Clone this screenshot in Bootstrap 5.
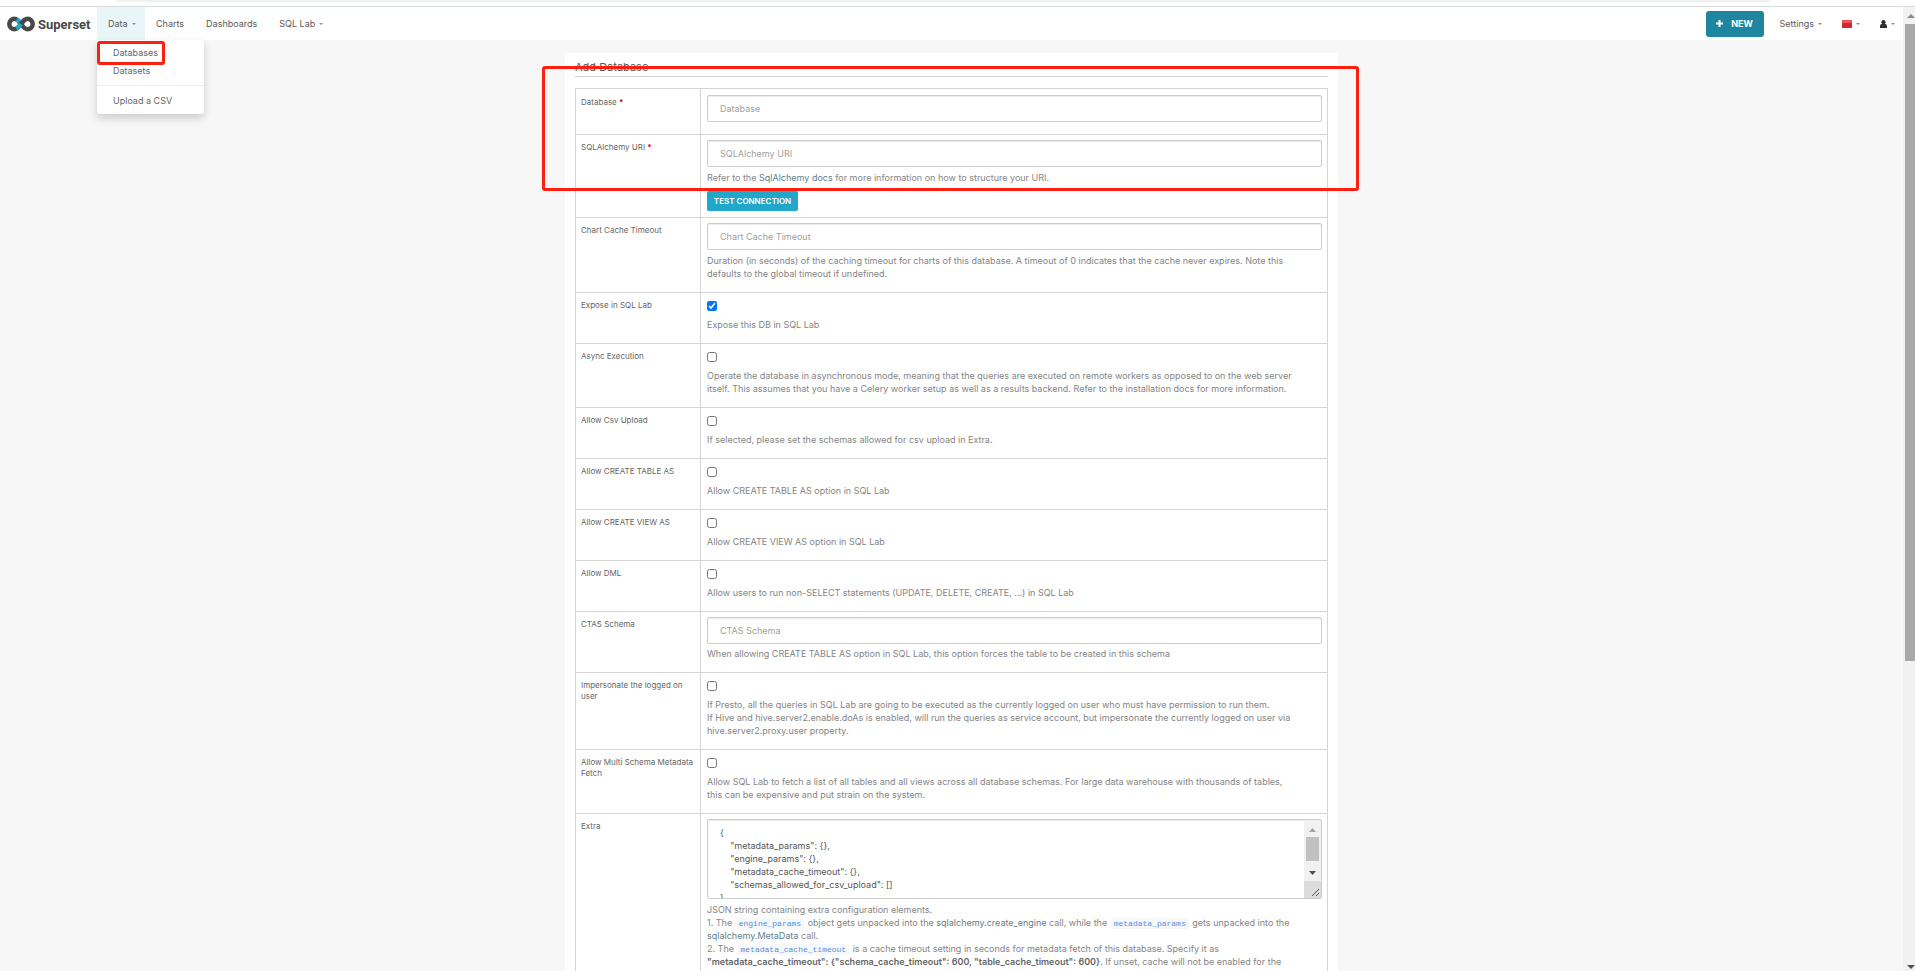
<!DOCTYPE html>
<html lang="en">
<head>
<meta charset="utf-8">
<meta name="viewport" content="width=device-width, initial-scale=1">
<title>Superset - Add Database</title>
<link href="https://cdn.jsdelivr.net/npm/bootstrap@5.3.0/dist/css/bootstrap.min.css" rel="stylesheet">
<style>
body { font-family: Inter, "Liberation Sans", sans-serif; font-size: 9px; line-height: 13px; color: #666; background: #f7f7f7; }
a { color: inherit; text-decoration: none; }
.window-edge { height: 7px; background: #fff; border-bottom: 1px solid #d9dcde; padding: 0 144px 0 116px; }
.window-edge div { height: 2px; background: #f0f1f2; border-radius: 0 0 2px 2px; }
.topbar { height: 33px; background: #fff; padding-left: 7px; }
.brand { width: 90px; color: #484848; }
.topbar .nav-link { font-size: 9px; line-height: 13px; color: #5a5a5a; padding: 0 11px; height: 33px; display: flex; align-items: center; }
.topbar .tools .nav-link { padding: 0 10px; }
.topbar .tools { margin-right: -2px; }
.topbar .nav-link.active { background: #e9f6f9; width: 48px; }
.topbar .dropdown-toggle::after { border-top: 2px solid #8c8c8c; border-left: 2px solid transparent; border-right: 2px solid transparent; margin-left: 4px; }
.data-menu { display: block; left: 0; top: 33px; width: 107px; min-width: 0; padding: 4px 0; border: 0; border-radius: 0 0 3px 3px; font-size: 9px; box-shadow: 0 4px 8px rgba(0,0,0,.18); }
.data-menu .dropdown-item { line-height: 18px; padding: 0 16px; color: #666; }
.data-menu .dropdown-divider { margin: 5px 0 6px; border-color: #eee; opacity: 1; }
.mark-box { position: absolute; border: 3px solid #ff1f10; border-radius: 3px; pointer-events: none; z-index: 1100; }
.mark-item { left: 0; top: 34px; width: 68px; height: 24px; }
.mark-form { left: -23px; right: -21px; top: 13px; height: 125px; }
.btn-new { width: 58px; height: 26px; background: #1f86a0; color: #fff; font-size: 9px; font-weight: 700; line-height: 13px; padding: 0; border: 0; border-radius: 3px; margin-right: 6px; }
.scroll-track { width: 12px; background: #f1f1f1; padding-left: 2px; }
.scroll-thumb { height: 68%; background: #a8a8a8; }
.panel { width: 773px; background: #fff; margin-top: 13px; padding: 8px 10px 0; }
.panel h1 { font-size: 11px; line-height: 13px; color: #555; margin: 0 0 11px; padding-bottom: 2px; border-bottom: 1px solid #d0d0d0; font-weight: 400; }
.form-grid { width: 100%; border-collapse: collapse; }
.form-grid th, .form-grid td { border: 1px solid #d5d5d5; vertical-align: top; padding: 5px 5px 12px 6px; }
.form-grid th { width: 125px; font-size: 8px; line-height: 11px; font-weight: 400; padding: 7px 5px 12px; color: #666; }
.form-grid tr:first-child th { padding-top: 8px; }
.form-grid tr:first-child td { padding-top: 6px; }
.help { color: #858585; }
.form-grid .form-control { height: 27px; font-size: 9px; line-height: 13px; padding: 6px 12px; border-color: #ccc; border-radius: 2px; color: #555; box-shadow: inset 0 1px 1px rgba(0,0,0,.08); }
.form-grid .form-control::placeholder { color: #a0a0a0; }
.form-grid input[type=checkbox] { display: block; width: 10px; height: 10px; margin: 3px 0 7px; }
.form-grid textarea.form-control { height: 80px; resize: none; overflow: hidden; }
.help.after { margin-top: 4px; }
.help.tight { margin-top: 3px; }
.btn-test { display: block; width: 91px; height: 20px; font-size: 8px; font-weight: 600; line-height: 12px; background: #20a7c9; color: #fff; border: 0; border-radius: 2px; padding: 0; margin: 7px 0 -6px; }
.lnk { color: #60808c; }
.form-grid code { font-family: "Liberation Mono", monospace; font-size: 8px; line-height: 8px; color: #5c8ee0; background: #f6f7f9; padding: 1px 3px; margin: 0 1px; border-radius: 2px; }
.form-grid b { color: #666; font-weight: 600; }
.req { color: #e00020; font-weight: 700; }
.area-scroll { position: absolute; top: 1px; right: 1px; bottom: 1px; width: 17px; background: #f1f1f1; padding: 8px 2px 0; }
.area-thumb { height: 24px; background: #c1c1c1; margin: 5px 0 10px; }
.grip { position: absolute; right: 0; bottom: 0; width: 17px; height: 17px; background: #dcdcdc; }
svg { display: block; }
</style>
</head>
<body>
<div class="vh-100 d-flex flex-column overflow-hidden">
  <div class="window-edge flex-shrink-0"><div></div></div>
  <div class="d-flex flex-grow-1 overflow-hidden">
    <div class="flex-grow-1 overflow-hidden">
      <nav class="topbar d-flex align-items-center">
        <a href="#" class="brand d-block" aria-label="Superset">
          <svg width="88" height="18" viewBox="0 0 88 18">
            <g fill="none" stroke-width="4.500">
              <path d="M14 9C11.500 5.500 10 3.800 7.500 3.800a5.200 5.200 0 0 0 0 10.400C10 14.200 11.500 12.500 14 9C16.500 5.500 18 3.800 20.500 3.800a5.200 5.200 0 0 1 0 10.400C18 14.200 16.500 12.500 14 9" stroke="#484848"/>
              <path d="M9.500 13.700Q11.500 12.500 14 9M9.800 4.500Q11 5.200 12.500 7" stroke="#20a7c9"/>
              <path d="M14 9Q16.500 5.500 18.500 4.300" stroke="#484848"/>
            </g>
            <text x="31" y="14" font-family="Roboto, sans-serif" font-size="13" font-weight="700" fill="#484848">Superset</text>
          </svg>
        </a>
        <div class="position-relative">
          <a class="nav-link dropdown-toggle active" href="#">Data</a>
          <div class="dropdown-menu data-menu">
            <a class="dropdown-item" href="#">Databases</a>
            <a class="dropdown-item" href="#">Datasets</a>
            <hr class="dropdown-divider">
            <a class="dropdown-item" href="#">Upload a CSV</a>
          </div>
          <div class="mark-box mark-item"></div>
        </div>
        <a class="nav-link" href="#">Charts</a>
        <a class="nav-link" href="#">Dashboards</a>
        <a class="nav-link dropdown-toggle" href="#">SQL Lab</a>
        <div class="tools ms-auto d-flex align-items-center">
          <button type="button" class="btn btn-new d-flex align-items-center justify-content-center gap-2">
            <svg width="7" height="7" viewBox="0 0 7 7"><path d="M3.500 0v7M0 3.500h7" stroke="#fff" stroke-width="2"/></svg>NEW
          </button>
          <a class="nav-link dropdown-toggle" href="#">Settings</a>
          <a class="nav-link dropdown-toggle" href="#" aria-label="Language">
            <svg width="10" height="8" viewBox="0 0 10 8"><rect width="10" height="8" fill="#d7262e"/><rect width="10" height="3" fill="#e9565c"/></svg>
          </a>
          <a class="nav-link dropdown-toggle" href="#" aria-label="User">
            <svg width="7" height="8" viewBox="0 0 7 8"><circle cx="3.500" cy="2.200" r="2.100" fill="#2b2b33"/><path d="M0 8V6.200Q0 4 1.800 4h3.400Q7 4 7 6.200V8z" fill="#2b2b33"/></svg>
          </a>
        </div>
      </nav>
      <main class="panel position-relative mx-auto">
        <h1>Add Database</h1>
        <div class="mark-box mark-form"></div>
        <table class="form-grid">
          <tr><th><label for="db">Database <span class="req">*</span></label></th>
            <td><input id="db" class="form-control" placeholder="Database"></td></tr>
          <tr><th><label for="uri">SQLAlchemy URI <span class="req">*</span></label></th>
            <td><input id="uri" class="form-control" placeholder="SQLAlchemy URI">
              <div class="help after">Refer to the <a class="lnk" href="#">SqlAlchemy docs</a> for more information on how to structure your URI.</div>
              <button type="button" class="btn btn-test">TEST CONNECTION</button></td></tr>
          <tr><th><label for="cct">Chart Cache Timeout</label></th>
            <td><input id="cct" class="form-control" placeholder="Chart Cache Timeout">
              <div class="help after">Duration (in seconds) of the caching timeout for charts of this database. A timeout of 0 indicates that the cache never expires. Note this<br>defaults to the global timeout if undefined.</div></td></tr>
          <tr><th><label for="expose">Expose in SQL Lab</label></th>
            <td><input type="checkbox" id="expose" checked><div class="help">Expose this DB in SQL Lab</div></td></tr>
          <tr><th><label for="async">Async Execution</label></th>
            <td><input type="checkbox" id="async"><div class="help">Operate the database in asynchronous mode, meaning that the queries are executed on remote workers as opposed to on the web server<br>itself. This assumes that you have a Celery worker setup as well as a results backend. Refer to the installation docs for more information.</div></td></tr>
          <tr><th><label for="csv">Allow Csv Upload</label></th>
            <td><input type="checkbox" id="csv"><div class="help">If selected, please set the schemas allowed for csv upload in Extra.</div></td></tr>
          <tr><th><label for="ctas">Allow CREATE TABLE AS</label></th>
            <td><input type="checkbox" id="ctas"><div class="help">Allow CREATE TABLE AS option in SQL Lab</div></td></tr>
          <tr><th><label for="cvas">Allow CREATE VIEW AS</label></th>
            <td><input type="checkbox" id="cvas"><div class="help">Allow CREATE VIEW AS option in SQL Lab</div></td></tr>
          <tr><th><label for="dml">Allow DML</label></th>
            <td><input type="checkbox" id="dml"><div class="help">Allow users to run non-SELECT statements (UPDATE, DELETE, CREATE, ...) in SQL Lab</div></td></tr>
          <tr><th><label for="schema">CTAS Schema</label></th>
            <td><input id="schema" class="form-control" placeholder="CTAS Schema">
              <div class="help after tight">When allowing CREATE TABLE AS option in SQL Lab, this option forces the table to be created in this schema</div></td></tr>
          <tr><th><label for="imp">Impersonate the logged on user</label></th>
            <td><input type="checkbox" id="imp"><div class="help">If Presto, all the queries in SQL Lab are going to be executed as the currently logged on user who must have permission to run them.<br>If Hive and hive.server2.enable.doAs is enabled, will run the queries as service account, but impersonate the currently logged on user via<br>hive.server2.proxy.user property.</div></td></tr>
          <tr><th><label for="multi">Allow Multi Schema Metadata Fetch</label></th>
            <td><input type="checkbox" id="multi"><div class="help">Allow SQL Lab to fetch a list of all tables and all views across all database schemas. For large data warehouse with thousands of tables,<br>this can be expensive and put strain on the system.</div></td></tr>
          <tr><th><label for="extra">Extra</label></th>
            <td><div class="position-relative">
<textarea id="extra" class="form-control">{
    "metadata_params": {},
    "engine_params": {},
    "metadata_cache_timeout": {},
    "schemas_allowed_for_csv_upload": []
}</textarea>
                <div class="area-scroll" aria-hidden="true">
                  <svg class="mx-auto" width="7" height="4"><path d="M0 4L3.500 0L7 4z" fill="#a3a3a3"/></svg>
                  <div class="area-thumb"></div>
                  <svg class="mx-auto" width="7" height="4"><path d="M0 0L3.500 4L7 0z" fill="#505050"/></svg>
                  <div class="grip"><svg width="17" height="17"><path d="M8 15L15 8M12 15L15 12" stroke="#555" fill="none"/></svg></div>
                </div>
              </div>
              <div class="help after">JSON string containing extra configuration elements.<br>1. The <code>engine_params</code> object gets unpacked into the <a class="lnk" href="#">sqlalchemy.create_engine</a> call, while the <code>metadata_params</code> gets unpacked into the<br><a class="lnk" href="#">sqlalchemy.MetaData</a> call.<br>2. The <code>metadata_cache_timeout</code> is a cache timeout setting in seconds for metadata fetch of this database. Specify it as<br><b>"metadata_cache_timeout": {"schema_cache_timeout": 600, "table_cache_timeout": 600}</b>. If unset, cache will not be enabled for the</div></td></tr>
        </table>
      </main>
    </div>
    <div class="scroll-track flex-shrink-0 d-flex flex-column" aria-hidden="true">
      <svg class="flex-shrink-0" width="10" height="17"><path d="M2 11L6 7L10 11z" fill="#8a8a8a"/></svg>
      <div class="flex-grow-1"><div class="scroll-thumb"></div></div>
      <svg class="flex-shrink-0" width="10" height="10"><path d="M2 4L6 8L10 4z" fill="#505050"/></svg>
    </div>
  </div>
</div>
<script src="https://cdn.jsdelivr.net/npm/bootstrap@5.3.0/dist/js/bootstrap.bundle.min.js"></script>
</body>
</html>
